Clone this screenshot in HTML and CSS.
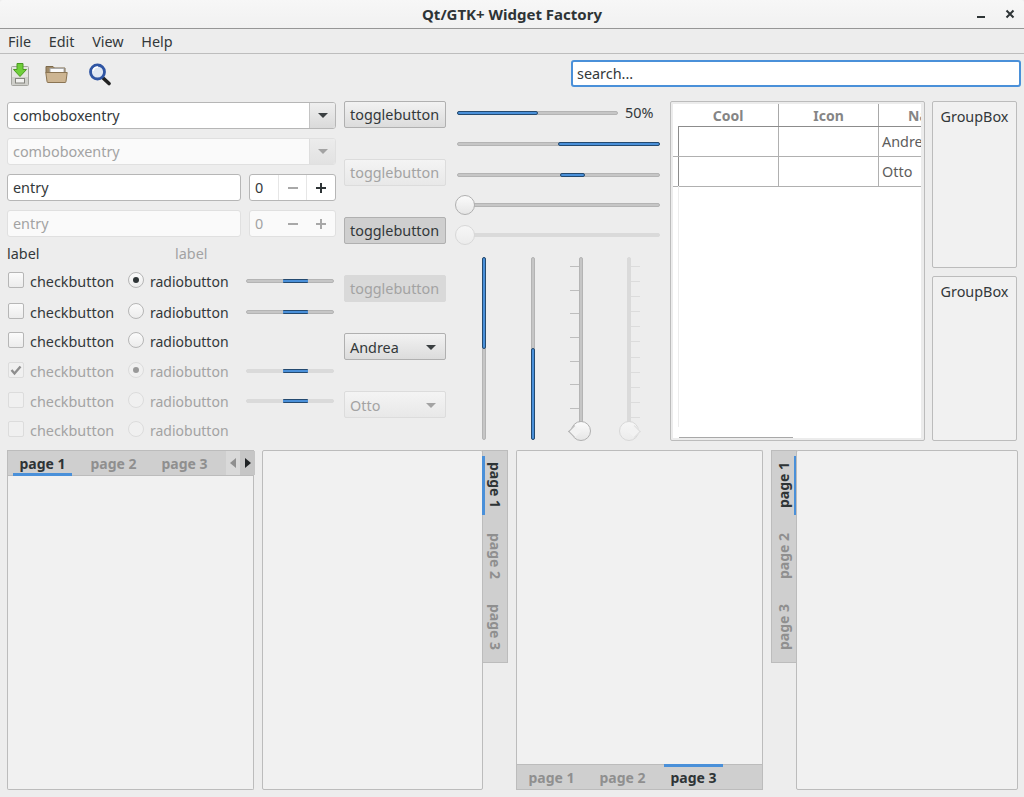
FILE: index.html
```html
<!DOCTYPE html>
<html lang="en">
<head>
<meta charset="utf-8">
<title>Qt/GTK+ Widget Factory</title>
<link rel="stylesheet" href="styles.css">
</head>
<body>
<div class="window">
  <header class="titlebar">
    <span class="title">Qt/GTK+ Widget Factory</span>
    <div class="wm-buttons">
      <svg width="10" height="10" viewBox="0 0 10 10"><rect x="1" y="7" width="8" height="2" fill="#2e3436"/></svg>
      <svg width="10" height="10" viewBox="0 0 10 10"><path d="M1.5 1.5l7 7M8.5 1.5l-7 7" stroke="#2e3436" stroke-width="2" fill="none"/></svg>
    </div>
  </header>
  <nav class="menubar"><span>File</span><span>Edit</span><span>View</span><span>Help</span></nav>
  <div class="toolbar">
    <svg class="tool tool-save" width="20" height="24" viewBox="0 0 20 24">
      <rect x="1.5" y="3.5" width="17" height="19" rx="1" fill="#e4e4e0" stroke="#a5a5a0"/>
      <rect x="2" y="14" width="16" height="8" fill="#cfcfca"/>
      <rect x="5.5" y="15.5" width="9" height="4.5" fill="#f2f2f0" stroke="#85857f"/>
      <path d="M7 0.5h6v6h3.5l-6.500 7-6.500-7H7z" fill="#6fcf3a" stroke="#4a9a20"/>
    </svg>
    <svg class="tool tool-open" width="23" height="18" viewBox="0 0 23 18">
      <path d="M1 3V1.500h7l1.500 1.500H20V8H1z" fill="#a08a68" stroke="#7d6a4c"/>
      <rect x="5" y="3.500" width="14" height="6" fill="#fafafa" stroke="#aaa"/>
      <path d="M0.800 7.500h21.400L21 16.500a1 1 0 0 1-1 1H3a1 1 0 0 1-1-1z" fill="#cdb592" stroke="#8a7453"/>
    </svg>
    <svg class="tool tool-find" width="24" height="23" viewBox="0 0 24 23">
      <path d="M14 14l7 6.500" stroke="#222" stroke-width="3.600" stroke-linecap="round"/>
      <circle cx="9.500" cy="9" r="7" fill="#dfe7f3" stroke="#2f55a4" stroke-width="2.800"/>
      <path d="M5 8a5 5 0 0 1 5-4" stroke="#fff" stroke-width="1.500" fill="none"/>
    </svg>
    <div class="search">search...</div>
  </div>

  <main class="content">
    <section class="top">
      <div class="col-forms">
        <div class="combo"><span class="field">comboboxentry</span><span class="combo-btn"><i class="arrow"></i></span></div>
        <div class="combo off"><span class="field">comboboxentry</span><span class="combo-btn"><i class="arrow"></i></span></div>
        <div class="entry-row">
          <div class="entry">entry</div>
          <div class="spin"><span class="spin-val">0</span><span class="spin-btn">
            <svg width="10" height="10" viewBox="0 0 10 10"><rect x="0" y="4" width="10" height="2" fill="#a8a8a8"/></svg></span><span class="spin-btn">
            <svg width="10" height="10" viewBox="0 0 10 10"><path d="M0 5h10M5 0v10" stroke="#2e3436" stroke-width="2"/></svg></span></div>
        </div>
        <div class="entry-row off">
          <div class="entry">entry</div>
          <div class="spin"><span class="spin-val">0</span><span class="spin-btn">
            <svg width="10" height="10" viewBox="0 0 10 10"><rect x="0" y="4" width="10" height="2" fill="#a8a8a8"/></svg></span><span class="spin-btn">
            <svg width="10" height="10" viewBox="0 0 10 10"><path d="M0 5h10M5 0v10" stroke="#a8a8a8" stroke-width="2"/></svg></span></div>
        </div>
        <div class="labels"><span>label</span><span class="muted">label</span></div>
        <div class="checks">
          <div class="chk"><i class="box"></i>checkbutton</div>
          <div class="rad"><i class="dot on"></i>radiobutton</div>
          <div class="mini"><i class="mini-fill"></i></div>

          <div class="chk"><i class="box"></i>checkbutton</div>
          <div class="rad"><i class="dot"></i>radiobutton</div>
          <div class="mini"><i class="mini-fill"></i></div>

          <div class="chk"><i class="box"></i>checkbutton</div>
          <div class="rad"><i class="dot"></i>radiobutton</div>
          <div></div>

          <div class="chk off"><i class="box"><svg width="14" height="14" viewBox="0 0 14 14"><path d="M2.500 7l3 3.500 6-7" stroke="#8e8e8e" stroke-width="2.400" fill="none"/></svg></i>checkbutton</div>
          <div class="rad off"><i class="dot on"></i>radiobutton</div>
          <div class="mini off"><i class="mini-fill"></i></div>

          <div class="chk off"><i class="box"></i>checkbutton</div>
          <div class="rad off"><i class="dot"></i>radiobutton</div>
          <div class="mini off"><i class="mini-fill"></i></div>

          <div class="chk off"><i class="box"></i>checkbutton</div>
          <div class="rad off"><i class="dot"></i>radiobutton</div>
          <div></div>
        </div>
      </div>

      <div class="col-buttons">
        <div class="btn">togglebutton</div>
        <div class="btn off">togglebutton</div>
        <div class="btn pressed">togglebutton</div>
        <div class="btn pressed off">togglebutton</div>
        <div class="btn drop">Andrea<i class="arrow"></i></div>
        <div class="btn drop off">Otto<i class="arrow"></i></div>
      </div>

      <div class="col-scales">
        <div class="scale progress"><div class="track"><i class="fill fill-half"></i></div><span class="pct">50%</span></div>
        <div class="scale"><div class="track"><i class="fill fill-end"></i></div></div>
        <div class="scale"><div class="track"><i class="fill fill-mid"></i></div></div>
        <div class="scale"><div class="track"><i class="knob"></i></div></div>
        <div class="scale off"><div class="track"><i class="knob"></i></div></div>
        <div class="verticals">
          <div class="vtrack v1"><i class="vfill vfill-top"></i></div>
          <div class="vtrack v2"><i class="vfill vfill-bottom"></i></div>
          <div class="vtrack v3"><div class="ticks ticks-left"><i></i><i></i><i></i><i></i><i></i><i></i><i></i></div><i class="knob vknob"></i></div>
          <div class="vtrack v4 off"><div class="ticks ticks-right"><i></i><i></i><i></i><i></i><i></i><i></i><i></i><i></i><i></i><i></i><i></i></div><i class="knob vknob"></i></div>
        </div>
      </div>

      <div class="tree">
        <div class="tree-inner">
          <div class="tree-head"><span>Cool</span><span>Icon</span><span>Name</span></div>
          <div class="tree-row"><span></span><span></span><span>Andrea</span></div>
          <div class="tree-row"><span></span><span></span><span>Otto</span></div>
          <i class="tree-hscroll"></i>
        </div>
      </div>

      <div class="col-groups">
        <div class="group">GroupBox</div>
        <div class="group">GroupBox</div>
      </div>
    </section>

    <section class="notebooks">
      <div class="nb nb-top">
        <div class="tabs">
          <span class="tab active">page 1</span><span class="tab">page 2</span><span class="tab">page 3</span>
          <span class="scroller"><b class="sb sb-off"><i class="tri tri-left"></i></b><b class="sb"><i class="tri tri-right"></i></b></span>
        </div>
        <div class="nb-body"></div>
      </div>
      <div class="nb nb-right">
        <div class="nb-body"></div>
        <div class="tabs">
          <span class="tab active"><em>page 1</em></span><span class="tab"><em>page 2</em></span><span class="tab"><em>page 3</em></span>
        </div>
      </div>
      <div class="nb nb-bottom">
        <div class="nb-body"></div>
        <div class="tabs">
          <span class="tab">page 1</span><span class="tab">page 2</span><span class="tab active">page 3</span>
        </div>
      </div>
      <div class="nb nb-left">
        <div class="tabs">
          <span class="tab active"><em>page 1</em></span><span class="tab"><em>page 2</em></span><span class="tab"><em>page 3</em></span>
        </div>
        <div class="nb-body"></div>
      </div>
    </section>
  </main>
</div>
</body>
</html>
```
FILE: styles.css
```css
* { box-sizing: border-box; }
html, body { margin: 0; padding: 0; }
body {
  width: 1024px; height: 797px; overflow: hidden;
  background: #ededed; color: #33383a;
  font-family: "Noto Sans", "DejaVu Sans", sans-serif;
  font-size: 14.400px; line-height: 18px;
}
i, em, b { display: block; font-style: normal; }
.window { display: flex; flex-direction: column; height: 797px; }

.titlebar {
  height: 29px; flex: none; position: relative;
  display: flex; align-items: center; justify-content: center;
  background: linear-gradient(#f7f7f7, #f1f1f1);
  border-bottom: 1px solid #969696;
  border-radius: 3px 3px 0 0;
}
.title { font-weight: 700; font-size: 15px; color: #2e3436; }
.wm-buttons { position: absolute; right: 9px; top: 9px; display: flex; gap: 19px; }

.menubar {
  height: 25px; flex: none; display: flex; align-items: center; gap: 17.700px;
  padding: 1px 0 0 8px; border-bottom: 1px solid #bdbdbd;
}
.toolbar { height: 40px; flex: none; display: flex; align-items: center; position: relative; padding-left: 10px; }
.tool { flex: none; }
.tool-save { margin-right: 15px; margin-top: 1px; }
.tool-open { margin-right: 20px; margin-top: -1px; }
.tool-find { margin-right: auto; margin-top: 1px; }
.search {
  width: 450px; height: 27px; margin-right: 3px; margin-top: -1px; padding: 3px 4px;
  background: #fff; border: 2px solid #4a90d9; border-radius: 3px;
}

.content { padding: 7px 7px 0; display: flex; flex-direction: column; gap: 9px; }
.top { display: flex; height: 340px; }

.col-forms { width: 329px; flex: none; margin-right: 8px; display: flex; flex-direction: column; gap: 9px; padding-top: 1px; }
.combo { display: flex; height: 27px; border: 1px solid #b6b6b6; border-radius: 3px; background: #fff; overflow: hidden; }
.field { flex: 1; padding: 4px 5px 0; }
.combo-btn {
  width: 26px; flex: none; border-left: 1px solid #c4c4c4;
  background: linear-gradient(#efefef, #dadada);
  display: flex; align-items: center; justify-content: center;
}
.arrow { width: 0; height: 0; border: 5.500px solid transparent; border-top: 5.500px solid #3a3f41; border-bottom: 0; }
.combo.off { border-color: #e0e0e0; color: #a3a3a3; background: #fafafa; }
.combo.off .combo-btn { border-left-color: #dedede; background: linear-gradient(#ececec, #e2e2e2); }
.combo.off .arrow { border-top-color: #a3a3a3; }

.entry-row { display: flex; gap: 8px; height: 27px; }
.entry { width: 234px; flex: none; padding: 4px 5px 0; background: #fff; border: 1px solid #b6b6b6; border-radius: 3px; }
.spin { flex: 1; display: flex; background: #fff; border: 1px solid #b6b6b6; border-radius: 3px; }
.spin-val { width: 28px; padding: 4px 5px 0; }
.spin-btn { width: 28px; display: flex; align-items: center; justify-content: center; border-left: 1px solid #e6e6e6; }
.entry-row.off { color: #a3a3a3; }
.entry-row.off .entry, .entry-row.off .spin { border-color: #e0e0e0; background: #fafafa; }
.entry-row.off .spin-btn { border-left-color: #fafafa; }

.labels { display: grid; grid-template-columns: 168px 1fr; height: 18px; margin-top: -1px; }
.muted { color: #a3a3a3; }
.checks {
  display: grid; margin-top: 0;
  grid-template-columns: 120px 118px 88px;
  grid-template-rows: 31px 29px 30px 30px 29px 16px;
  padding-left: 1px;
}
.chk, .rad { display: flex; align-items: flex-start; gap: 6px; line-height: 19px; }
.rad { font-size: 14px; }
.box {
  width: 16px; height: 16px; flex: none; border: 1px solid #b6b6b6; border-radius: 2px;
  background: linear-gradient(#fbfbfb, #ececec);
  display: flex; align-items: center; justify-content: center;
}
.dot {
  width: 16px; height: 16px; flex: none; border: 1px solid #b6b6b6; border-radius: 50%;
  background: linear-gradient(#fbfbfb, #ececec); position: relative;
}
.dot.on::after { content: ""; position: absolute; left: 4px; top: 4px; width: 6px; height: 6px; border-radius: 50%; background: #2e3436; }
.rad.off .dot.on::after { background: #999; }
.chk.off, .rad.off { color: #a3a3a3; }
.chk.off .box, .rad.off .dot { border-color: #dcdcdc; background: #f0f0f0; }

.mini {
  width: 88px; height: 4px; margin-top: 7px; position: relative;
  background: #c6c6c6; border: 1px solid #b4b4b4; border-radius: 2px;
}
.mini-fill { position: absolute; left: 36px; top: -1px; width: 25px; height: 4px; background: #4a90d9; border: 1px solid #244a70; border-radius: 1px; border-width: 1px 0; }
.mini.off { background: #dadada; border-color: #dadada; }

.col-buttons { width: 102px; flex: none; display: flex; flex-direction: column; gap: 31px; margin-right: 11px; }
.btn {
  height: 27px; padding: 4px 5px 0; border: 1px solid #b0b0b0; border-radius: 2px;
  background: linear-gradient(#f2f2f2, #dcdcdc);
}
.btn.off { border-color: #dcdcdc; color: #a3a3a3; background: linear-gradient(#f4f4f4, #e8e8e8); }
.btn.pressed { background: #cfcfcf; border-color: #b0b0b0; }
.btn.pressed.off { background: #d9d9d9; border-color: #d9d9d9; }
.drop { display: flex; align-items: center; justify-content: space-between; padding: 2px 9px 0 5px; }
.drop.off .arrow { border-top-color: #a3a3a3; }

.col-scales {
  width: 203px; flex: none; margin-right: 10px; padding-top: 2px;
  display: grid; grid-template-rows: 31px 31px 30px 30px 32px 183px;
}
.scale { height: 20px; display: flex; align-items: center; }
.track {
  flex: 1; height: 4px; position: relative;
  background: #c6c6c6; border: 1px solid #b4b4b4; border-radius: 2px;
}
.scale.off .track { background: #dadada; border-color: #dadada; }
.fill { position: absolute; top: -1px; height: 4px; background: #4a90d9; border: 1px solid #244a70; border-radius: 2px; }
.progress { gap: 7px; }
.progress .track { flex: none; width: 161px; }
.pct { width: 35px; white-space: nowrap; }
.fill-half { left: -1px; width: 81px; }
.fill-end { right: -1px; width: 102px; }
.fill-mid { left: 102px; width: 25px; }
.knob {
  position: absolute; left: -3px; top: -9px; width: 20px; height: 20px; border-radius: 50%;
  background: linear-gradient(#fbfbfb, #e6e6e6); border: 1px solid #b0b0b0;
}
.scale.off .knob, .off > .knob { border-color: #d8d8d8; background: linear-gradient(#f6f6f6, #ececec); }

.verticals { display: flex; position: relative; height: 183px; padding-left: 25px; }
.vtrack {
  width: 4px; height: 183px; position: relative; flex: none;
  background: #c6c6c6; border: 1px solid #b4b4b4; border-radius: 2px;
}
.vtrack.off { background: #dadada; border-color: #dadada; }
.v2, .v3, .v4 { margin-left: 45px; }
.v3, .v4 { margin-left: 44px; }
.vfill { position: absolute; left: -1px; width: 4px; background: #4a90d9; border: 1px solid #244a70; border-radius: 2px; }
.vfill-top { top: -1px; height: 92px; }
.vfill-bottom { bottom: -1px; height: 92px; }
.vknob { left: -9px; top: 163px; }
.v3 .vknob::before {
  content: ""; position: absolute; left: -2px; top: 5px; width: 8px; height: 8px;
  background: #f2f2f2; border-left: 1px solid #b0b0b0; border-bottom: 1px solid #b0b0b0;
  transform: rotate(45deg);
}
.v4 .vknob::before {
  content: ""; position: absolute; right: -1px; top: 5px; width: 8px; height: 8px;
  background: #f2f2f2; border-right: 1px solid #dcdcdc; border-top: 1px solid #dcdcdc;
  transform: rotate(45deg);
}
.ticks { position: absolute; top: 8px; display: flex; flex-direction: column; justify-content: space-between; }
.ticks i { height: 1px; width: 9px; background: #bdbdbd; }
.ticks-left { right: 3px; height: 143px; }
.ticks-right { left: 3px; height: 152px; }
.ticks-right i { background: #dcdcdc; }

.tree { width: 255px; flex: none; margin-right: 7px; border: 1px solid #bcbcbc; border-radius: 2px; background: #ececec; padding: 2px 3px 2px 2px; }
.tree-inner { height: 100%; background: #fff; overflow: hidden; position: relative; border-right: 0; }
.tree-inner::before { content: ""; position: absolute; left: 5px; top: 82px; height: 241px; width: 1px; background: #ececec; }
.tree-head, .tree-row { display: grid; grid-template-columns: 100px 100px 60px; white-space: nowrap; overflow: hidden; }
.tree-head { height: 23px; margin-left: 5px; border-bottom: 1px solid #8c8c8c; font-weight: 700; font-size: 14px; color: #858585; line-height: 24px; text-align: center; }
.tree-head span + span { border-left: 1px solid #a8a8a8; }
.tree-head span:last-child { padding-left: 29px; text-align: left; overflow: hidden; }
.tree-row { height: 30px; padding-left: 5px; border-bottom: 1px solid #b0b0b0; color: #5d5d5d; line-height: 29px; }
.tree-row span:first-child { border-left: 1px solid #8c8c8c; }
.tree-row span + span { border-left: 1px solid #b0b0b0; }
.tree-row span:last-child { padding-left: 3px; overflow: hidden; }
.tree-hscroll { position: absolute; left: 6px; bottom: 0; width: 114px; height: 1px; background: #a8a8a8; }

.col-groups { width: 85px; flex: none; display: flex; flex-direction: column; gap: 8px; }
.group { flex: none; height: 167px; background: #f1f1f1; border: 1px solid #bcbcbc; border-radius: 2px; padding: 6px 0; text-align: center; }
.group + .group { height: 165px; }

.notebooks { display: flex; gap: 8px; height: 340px; }
.nb { width: 247px; flex: none; display: flex; }
.nb-right { width: 246px; }
.nb-body { flex: 1; background: #f1f1f1; border: 1px solid #bcbcbc; border-radius: 2px; }
.tabs { display: flex; flex: none; background: #cfcfcf; border: 1px solid #bcbcbc; font-weight: 700; font-size: 14px; color: #8f8f8f; }
.tab { flex: none; position: relative; display: flex; align-items: center; justify-content: center; }
.tab.active { color: #2e3436; }
.tab.active::after { content: ""; position: absolute; background: #4a90d9; }
.tab em { writing-mode: vertical-rl; }

.nb-top, .nb-bottom { flex-direction: column; }
.nb-top .nb-body { border-top: 0; border-radius: 0 0 2px 2px; }
.nb-bottom .nb-body { border-bottom: 0; border-radius: 2px 2px 0 0; }
.nb-top .tabs, .nb-bottom .tabs { height: 26px; padding-left: 5px; gap: 12px; }
.nb-top .tab, .nb-bottom .tab { width: 59px; padding-top: 2px; }
.nb-top .tab.active::after { left: 0; right: 0; bottom: -1px; height: 3px; }
.nb-bottom .tab.active::after { left: 0; right: 0; top: -1px; height: 3px; }
.scroller { margin-left: auto; display: flex; margin-right: 1px; }
.sb { width: 14px; display: flex; align-items: center; justify-content: center; background: #cfcfcf; }
.sb-off { background: #d9d9d9; }
.sb + .sb { width: 15px; background: #c6c6c6; }
.tri { width: 0; height: 0; border: 5.500px solid transparent; }
.tri-left { border-right: 6px solid #8f8f8f; border-left: 0; }
.tri-right { border-left: 6px solid #1f2224; border-right: 0; }

.nb-right .tabs, .nb-left .tabs { width: 26px; height: 213px; flex-direction: column; padding-top: 5px; gap: 12px; }
.nb-right .tab, .nb-left .tab { height: 59px; }
.nb-left .tab em { transform: rotate(180deg); }
.nb-right .tab.active::after { left: -1px; top: 0; bottom: 0; width: 3px; }
.nb-left .tab.active::after { right: -1px; top: 0; bottom: 0; width: 3px; }
.nb-right .tabs { margin-left: -1px; }
.nb-left .tabs { margin-right: -1px; }
.nb-left .nb-body { position: relative; }
```
